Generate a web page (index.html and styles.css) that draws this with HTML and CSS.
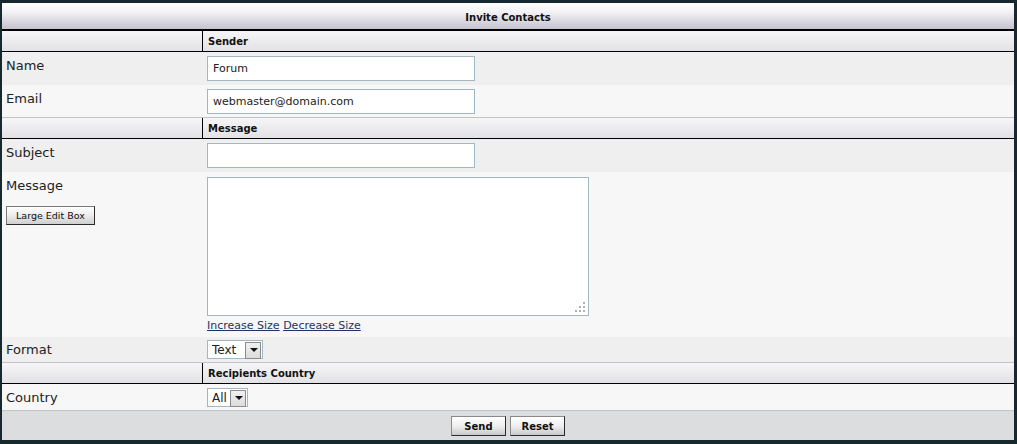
FILE: index.html
```html
<!DOCTYPE html>
<html lang="en">
<head>
    <meta charset="UTF-8">
    <title>Invite Contacts</title>
    <link rel="stylesheet" href="styles.css">
</head>
<body>
    <form class="panel">
        <div class="title-bar">Invite Contacts</div>

        <div class="cat-row">
            <div class="cat-left"></div>
            <div class="cat-text">Sender</div>
        </div>
        <div class="row row-a">
            <div class="label">Name</div>
            <div class="field"><input type="text" class="text-input" value="Forum"></div>
        </div>
        <div class="row row-b row-end">
            <div class="label">Email</div>
            <div class="field"><input type="text" class="text-input" value="webmaster@domain.com"></div>
        </div>

        <div class="cat-row">
            <div class="cat-left"></div>
            <div class="cat-text">Message</div>
        </div>
        <div class="row row-a">
            <div class="label">Subject</div>
            <div class="field"><input type="text" class="text-input" value=""></div>
        </div>
        <div class="row row-b message-row">
            <div class="label">
                Message
                <div class="edit-box"><button type="button" class="small-btn">Large Edit Box</button></div>
            </div>
            <div class="field">
                <div class="textarea-wrap">
                    <textarea class="message-box"></textarea>
                    <span class="grip"></span>
                </div>
                <div class="size-links"><a href="#">Increase Size</a> <a href="#">Decrease Size</a></div>
            </div>
        </div>
        <div class="row row-a row-end format-row">
            <div class="label">Format</div>
            <div class="field">
                <span class="select-wrap"><select class="select-box format-select"><option>Text</option><option>HTML</option></select></span>
            </div>
        </div>

        <div class="cat-row">
            <div class="cat-left"></div>
            <div class="cat-text">Recipients Country</div>
        </div>
        <div class="row row-b row-end country-row">
            <div class="label">Country</div>
            <div class="field">
                <span class="select-wrap"><select class="select-box country-select"><option>All</option></select></span>
            </div>
        </div>

        <div class="footer-row">
            <button type="submit" class="action-btn">Send</button>
            <button type="reset" class="action-btn">Reset</button>
        </div>
    </form>
</body>
</html>
```

FILE: styles.css
```css
html, body {
    margin: 0;
}
body {
    background: #18282f;
    font-family: "DejaVu Sans", Verdana, sans-serif;
    color: #222;
    padding: 3px 3px 4px 2px;
}
* {
    box-sizing: border-box;
}
.panel {
    margin: 0;
    background: #f5f5f5;
}
.title-bar {
    height: 28px;
    padding-top: 2px;
    line-height: 25px;
    background: linear-gradient(#ffffff, #f3f3f5 35%, #c3c2ce);
    border-bottom: 2px solid #000;
    text-align: center;
    font-size: 10px;
    font-weight: bold;
    color: #111;
}
.cat-row {
    display: flex;
    height: 21px;
    background: linear-gradient(#f6f6f8, #e2e2e6);
    border-bottom: 1px solid #000;
    font-size: 10px;
    font-weight: bold;
    color: #111;
}
.cat-left {
    width: 201px;
    border-right: 1px solid #000;
}
.cat-text {
    padding: 2px 0 0 5px;
    line-height: 18px;
}
.row {
    display: flex;
}
.row-a {
    background: #efefef;
    height: 33px;
}
.row-b {
    background: #f7f7f7;
    height: 33px;
}
.row-end {
    border-bottom: 1px solid #c3c3c3;
}
.label {
    width: 201px;
    flex: none;
    padding: 6px 0 0 4px;
    font-size: 13px;
    line-height: 15px;
    color: #222;
}
.field {
    padding: 4px 0 0 4px;
}
.text-input {
    display: block;
    width: 268px;
    height: 25px;
    margin: 0;
    padding: 0 5px;
    border: 1px solid #a3b7c2;
    background: #fff;
    font-family: "DejaVu Sans", Verdana, sans-serif;
    font-size: 11px;
    color: #222;
}
.message-row {
    height: 165px;
}
.message-row .field {
    padding-top: 5px;
}
.textarea-wrap {
    position: relative;
    width: 382px;
    height: 139px;
}
.message-box {
    display: block;
    width: 382px;
    height: 139px;
    margin: 0;
    border: 1px solid #a3b7c2;
    resize: none;
    background: #fff;
}
/* resize grip dots in the corner */
.grip {
    position: absolute;
    right: 4px;
    bottom: 4px;
    width: 2px;
    height: 2px;
    background: #b0b0b0;
    box-shadow: -4px 0 #b0b0b0, -8px 0 #b0b0b0, 0 -4px #b0b0b0, -4px -4px #b0b0b0, 0 -8px #b0b0b0;
}
.size-links {
    margin-top: 3px;
    font-size: 11px;
    line-height: 14px;
}
.size-links a {
    color: #1e3462;
    text-decoration: underline;
}
.edit-box {
    margin-top: 13px;
}
.small-btn {
    display: block;
    width: 89px;
    height: 19px;
    padding: 0;
    border: 1px solid #7a7a7a;
    border-right-color: #2b2b2b;
    border-bottom-color: #2b2b2b;
    background: linear-gradient(#ffffff, #ececec 50%, #cfcfcf);
    font-family: "DejaVu Sans", Verdana, sans-serif;
    font-size: 9.5px;
    color: #111;
}
.format-row {
    height: 26px;
}
.format-row .label {
    padding-top: 5px;
}
.format-row .field {
    padding-top: 3px;
}
.country-row {
    height: 27px;
}
.country-row .label {
    padding-top: 6px;
}
.select-wrap {
    position: relative;
    display: block;
}
.select-box {
    display: block;
    height: 19px;
    margin: 0;
    padding: 0 0 0 4px;
    border: 1px solid #a3b7c2;
    border-radius: 0;
    background: #fff;
    -webkit-appearance: none;
    appearance: none;
    font-family: "DejaVu Sans", Verdana, sans-serif;
    font-size: 12px;
    color: #222;
}
.format-select {
    width: 56px;
}
.country-select {
    width: 41px;
}
/* the dropdown arrow button */
.select-wrap::after {
    content: "";
    position: absolute;
    right: 2px;
    top: 2px;
    width: 14px;
    height: 15px;
    border: 1px solid #8c8c8c;
    background: linear-gradient(#f0f0f0, #dcdcdc);
    pointer-events: none;
}
.select-wrap::before {
    content: "";
    position: absolute;
    right: 5px;
    top: 8px;
    border-left: 4px solid transparent;
    border-right: 4px solid transparent;
    border-top: 4px solid #111;
    z-index: 1;
    pointer-events: none;
}
.footer-row {
    height: 29px;
    padding-top: 5px;
    background: #dcdddf;
    text-align: center;
    font-size: 13px;
}
.action-btn {
    width: 55px;
    height: 20px;
    margin: 0;
    padding: 0;
    vertical-align: top;
    border: 1px solid #8a8a8a;
    border-right-color: #2b2b2b;
    border-bottom-color: #2b2b2b;
    background: linear-gradient(#ffffff, #efefef 50%, #c8c8c8);
    font-family: "DejaVu Sans", Verdana, sans-serif;
    font-size: 10px;
    font-weight: bold;
    color: #111;
}
```
